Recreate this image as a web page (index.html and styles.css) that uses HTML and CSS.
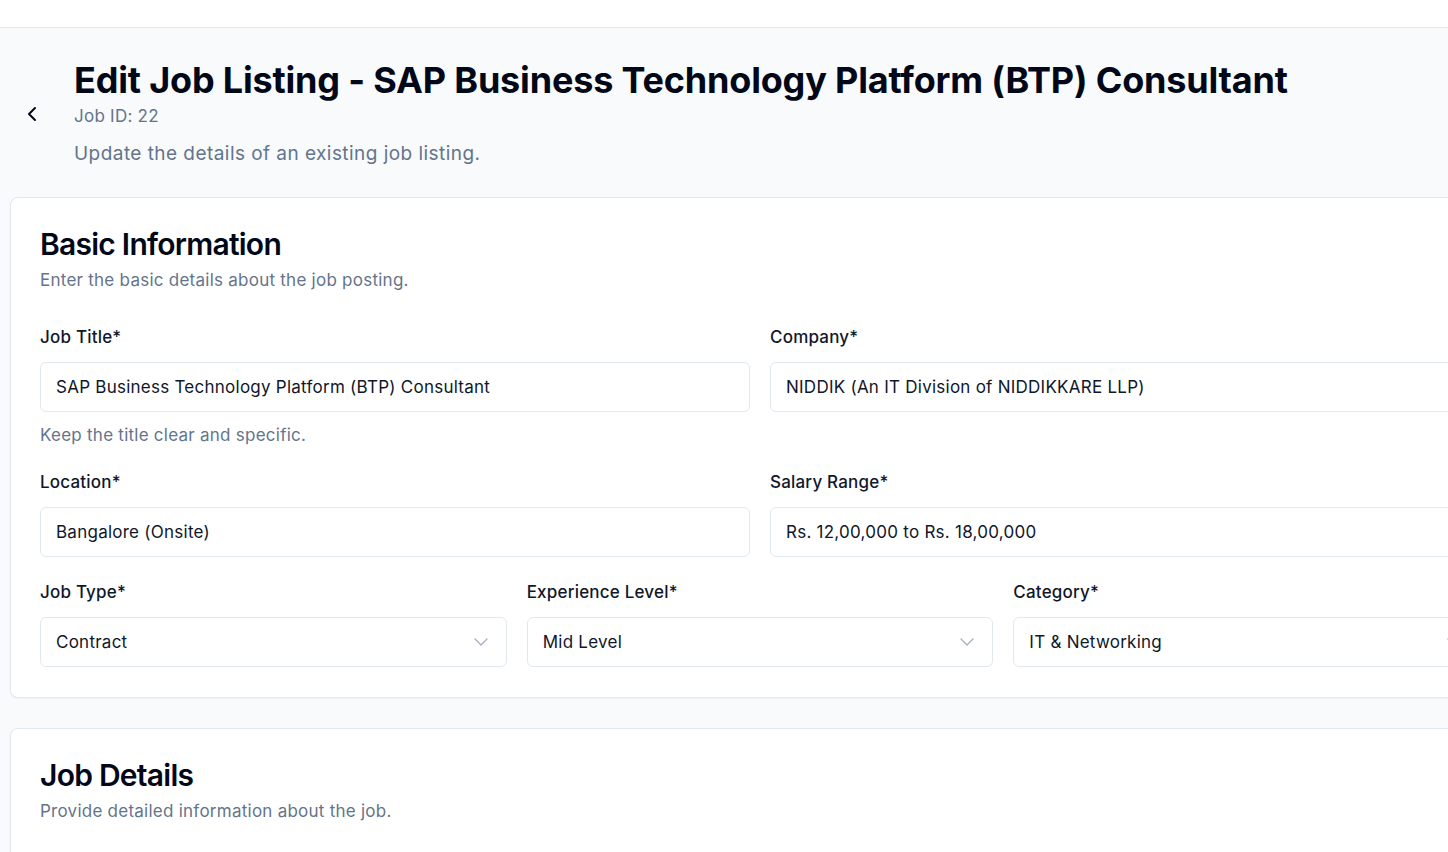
FILE: index.html
```html
<!DOCTYPE html>
<html lang="en">
<head>
<meta charset="utf-8">
<title>Edit Job Listing</title>
<link rel="stylesheet" href="styles.css">
</head>
<body>
<div class="topbar"></div>
<main class="page">
  <header class="page-header">
    <button class="back-btn" type="button" aria-label="Back">
      <svg width="24" height="24" viewBox="0 0 24 24" fill="none" stroke="currentColor" stroke-width="2" stroke-linecap="round" stroke-linejoin="round"><path d="m15 18-6-6 6-6"/></svg>
    </button>
    <div class="header-text">
      <h1 class="title">Edit Job Listing - SAP Business Technology Platform (BTP) Consultant</h1>
      <p class="job-id">Job ID: 22</p>
      <p class="subtitle">Update the details of an existing job listing.</p>
    </div>
  </header>

  <section class="card">
    <h2 class="card-title">Basic Information</h2>
    <p class="card-desc">Enter the basic details about the job posting.</p>
    <div class="form">
      <div class="row two">
        <div class="field">
          <label class="label">Job Title*</label>
          <div class="input">SAP Business Technology Platform (BTP) Consultant</div>
          <p class="hint">Keep the title clear and specific.</p>
        </div>
        <div class="field">
          <label class="label">Company*</label>
          <div class="input">NIDDIK (An IT Division of NIDDIKKARE LLP)</div>
        </div>
      </div>
      <div class="row two">
        <div class="field">
          <label class="label">Location*</label>
          <div class="input">Bangalore (Onsite)</div>
        </div>
        <div class="field">
          <label class="label">Salary Range*</label>
          <div class="input">Rs. 12,00,000 to Rs. 18,00,000</div>
        </div>
      </div>
      <div class="row three">
        <div class="field">
          <label class="label">Job Type*</label>
          <div class="input select"><span>Contract</span>
            <svg class="chev" width="24" height="24" viewBox="0 0 24 24" fill="none" stroke="currentColor" stroke-width="1.25" stroke-linecap="round" stroke-linejoin="round"><path d="m6 9 6 6 6-6"/></svg>
          </div>
        </div>
        <div class="field">
          <label class="label">Experience Level*</label>
          <div class="input select"><span>Mid Level</span>
            <svg class="chev" width="24" height="24" viewBox="0 0 24 24" fill="none" stroke="currentColor" stroke-width="1.25" stroke-linecap="round" stroke-linejoin="round"><path d="m6 9 6 6 6-6"/></svg>
          </div>
        </div>
        <div class="field">
          <label class="label">Category*</label>
          <div class="input select"><span>IT &amp; Networking</span>
            <svg class="chev" width="24" height="24" viewBox="0 0 24 24" fill="none" stroke="currentColor" stroke-width="1.25" stroke-linecap="round" stroke-linejoin="round"><path d="m6 9 6 6 6-6"/></svg>
          </div>
        </div>
      </div>
    </div>
  </section>

  <section class="card">
    <h2 class="card-title">Job Details</h2>
    <p class="card-desc">Provide detailed information about the job.</p>
    <div class="spacer"></div>
  </section>
</main>
</body>
</html>
```

FILE: styles.css
```css
* { box-sizing: border-box; }
html, body { overflow: hidden; }
body {
  margin: 0;
  background: #f8fafc;
  font-family: Inter, "Noto Sans", sans-serif;
  color: #020817;
}
.topbar {
  height: 28px;
  background: #ffffff;
  border-bottom: 1px solid #e2e8f0;
}
.page {
  width: 1520px;
  padding: 32px 10px 0 10px;
  display: flex;
  flex-direction: column;
  gap: 30px;
}
.page-header {
  display: flex;
  align-items: center;
  gap: 22px;
  padding-left: 2px;
}
.back-btn {
  width: 40px;
  height: 40px;
  border: none;
  background: transparent;
  color: #020817;
  display: flex;
  align-items: center;
  justify-content: center;
  padding: 0;
}
.header-text { display: flex; flex-direction: column; }
.title {
  margin: 0;
  font-size: 36px;
  line-height: 40px;
  font-weight: 700;
  letter-spacing: -0.005em;
  color: #020817;
}
.job-id {
  margin: 4px 0 0;
  font-size: 17px;
  line-height: 24px;
  letter-spacing: 0.25px;
  color: #64748b;
}
.subtitle {
  margin: 12px 0 0;
  font-size: 19px;
  line-height: 27px;
  letter-spacing: 0.45px;
  color: #64748b;
}
.card {
  background: #ffffff;
  border: 1px solid #e2e8f0;
  border-radius: 8px;
  padding: 29px 29px 30px 29px;
  box-shadow: 0 1px 2px rgba(0,0,0,0.04);
}
.card-title {
  margin: 0;
  font-size: 30px;
  line-height: 34px;
  font-weight: 600;
  letter-spacing: -0.025em;
  color: #020817;
}
.card-desc {
  margin: 7px 0 0;
  font-size: 17px;
  line-height: 24px;
  letter-spacing: 0.25px;
  color: #64748b;
}
.form {
  margin-top: 33px;
  display: flex;
  flex-direction: column;
  gap: 23px;
}
.row { display: grid; gap: 20px; }
.row.two { grid-template-columns: 1fr 1fr; }
.row.three { grid-template-columns: 1fr 1fr 1fr; }
.field { display: flex; flex-direction: column; }
.label {
  font-size: 17px;
  line-height: 24px;
  font-weight: 500;
  letter-spacing: 0.2px;
  color: #0f172a;
  margin-bottom: 13px;
}
.input {
  height: 50px;
  border: 1px solid #e2e8f0;
  border-radius: 6px;
  background: #ffffff;
  padding: 0 15px;
  display: flex;
  align-items: center;
  font-size: 17px;
  letter-spacing: 0.25px;
  color: #0f172a;
}
.select { justify-content: space-between; padding-right: 13px; }
.chev { color: #a3afbf; }
.hint {
  margin: 11px 0 0;
  font-size: 17px;
  line-height: 24px;
  letter-spacing: 0.25px;
  color: #64748b;
}
.spacer { height: 60px; }
```
